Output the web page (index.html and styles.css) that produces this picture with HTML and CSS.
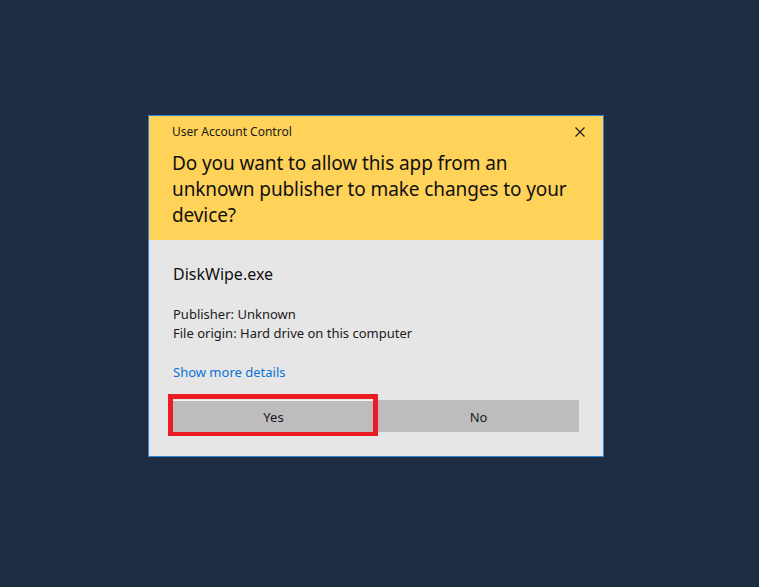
FILE: index.html
```html
<!DOCTYPE html>
<html lang="en">
<head>
<meta charset="utf-8">
<title>User Account Control</title>
<link rel="stylesheet" href="styles.css">
</head>
<body>
<div class="dialog">
  <div class="header">
    <div class="title-row">
      <span class="title">User Account Control</span>
      <svg class="close" width="10" height="10" viewBox="0 0 10 10" aria-hidden="true">
        <path d="M0.5 0.5 L9.5 9.5 M9.5 0.5 L0.5 9.5" stroke="#1a1a1a" stroke-width="1.1" fill="none"/>
      </svg>
    </div>
    <h1 class="question">Do you want to allow this app from an<br>unknown publisher to make changes to your<br>device?</h1>
  </div>
  <div class="body">
    <div class="app-name">DiskWipe.exe</div>
    <div class="meta">
      <div>Publisher: Unknown</div>
      <div>File origin: Hard drive on this computer</div>
    </div>
    <a class="details" href="#">Show more details</a>
    <div class="buttons">
      <div class="btn-wrap">
        <button class="btn btn-yes">Yes</button>
        <span class="highlight"></span>
      </div>
      <button class="btn">No</button>
    </div>
  </div>
</div>
</body>
</html>
```
FILE: styles.css
```css
html, body {
  margin: 0;
  padding: 0;
  background: #1f2d42;
  height: 100%;
}
body {
  font-family: "Noto Sans", "Open Sans", sans-serif;
  color: #1a1a1a;
}
.dialog {
  box-sizing: border-box;
  width: 456px;
  margin: 115px 0 0 148px;
  border: 1px solid #2f86d8;
  background: #e6e6e6;
}
.header {
  background: #ffd25a;
  padding: 8px 24px 12px 23px;
}
.title-row {
  display: flex;
  align-items: center;
  justify-content: space-between;
  height: 16px;
}
.title {
  font-size: 12px;
  line-height: 16px;
  color: #1a1a1a;
}
.close {
  margin-right: -6px;
}
.question {
  margin: 10px 0 0 0;
  font-size: 19px;
  line-height: 26px;
  letter-spacing: -0.1px;
  font-weight: normal;
  color: #111;
  white-space: nowrap;
}
.body {
  padding: 23px 24px 24px 24px;
}
.app-name {
  font-size: 16px;
  line-height: 22px;
  color: #111;
}
.meta {
  margin-top: 20px;
  font-size: 13px;
  line-height: 19px;
}
.details {
  display: block;
  margin-top: 20px;
  font-size: 13px;
  line-height: 19px;
  color: #0a72d6;
  text-decoration: none;
}
.buttons {
  margin-top: 18px;
  display: grid;
  grid-template-columns: 1fr 1fr;
  gap: 4px;
}
.btn-wrap {
  position: relative;
  display: flex;
}
.btn {
  flex: 1;
  height: 32px;
  border: none;
  margin: 0;
  background: #bebcbd;
  font-family: "Noto Sans", "Open Sans", sans-serif;
  font-size: 13px;
  color: #1a1a1a;
  padding: 1px 0 0 0;
}
.btn-yes {
  box-shadow: inset 0 1px 0 #f4f4f4;
}
.highlight {
  position: absolute;
  top: -6px;
  left: -5px;
  right: -4px;
  bottom: -4px;
  border: 5px solid #ec1c24;
  border-bottom-width: 4px;
  pointer-events: none;
}
```
